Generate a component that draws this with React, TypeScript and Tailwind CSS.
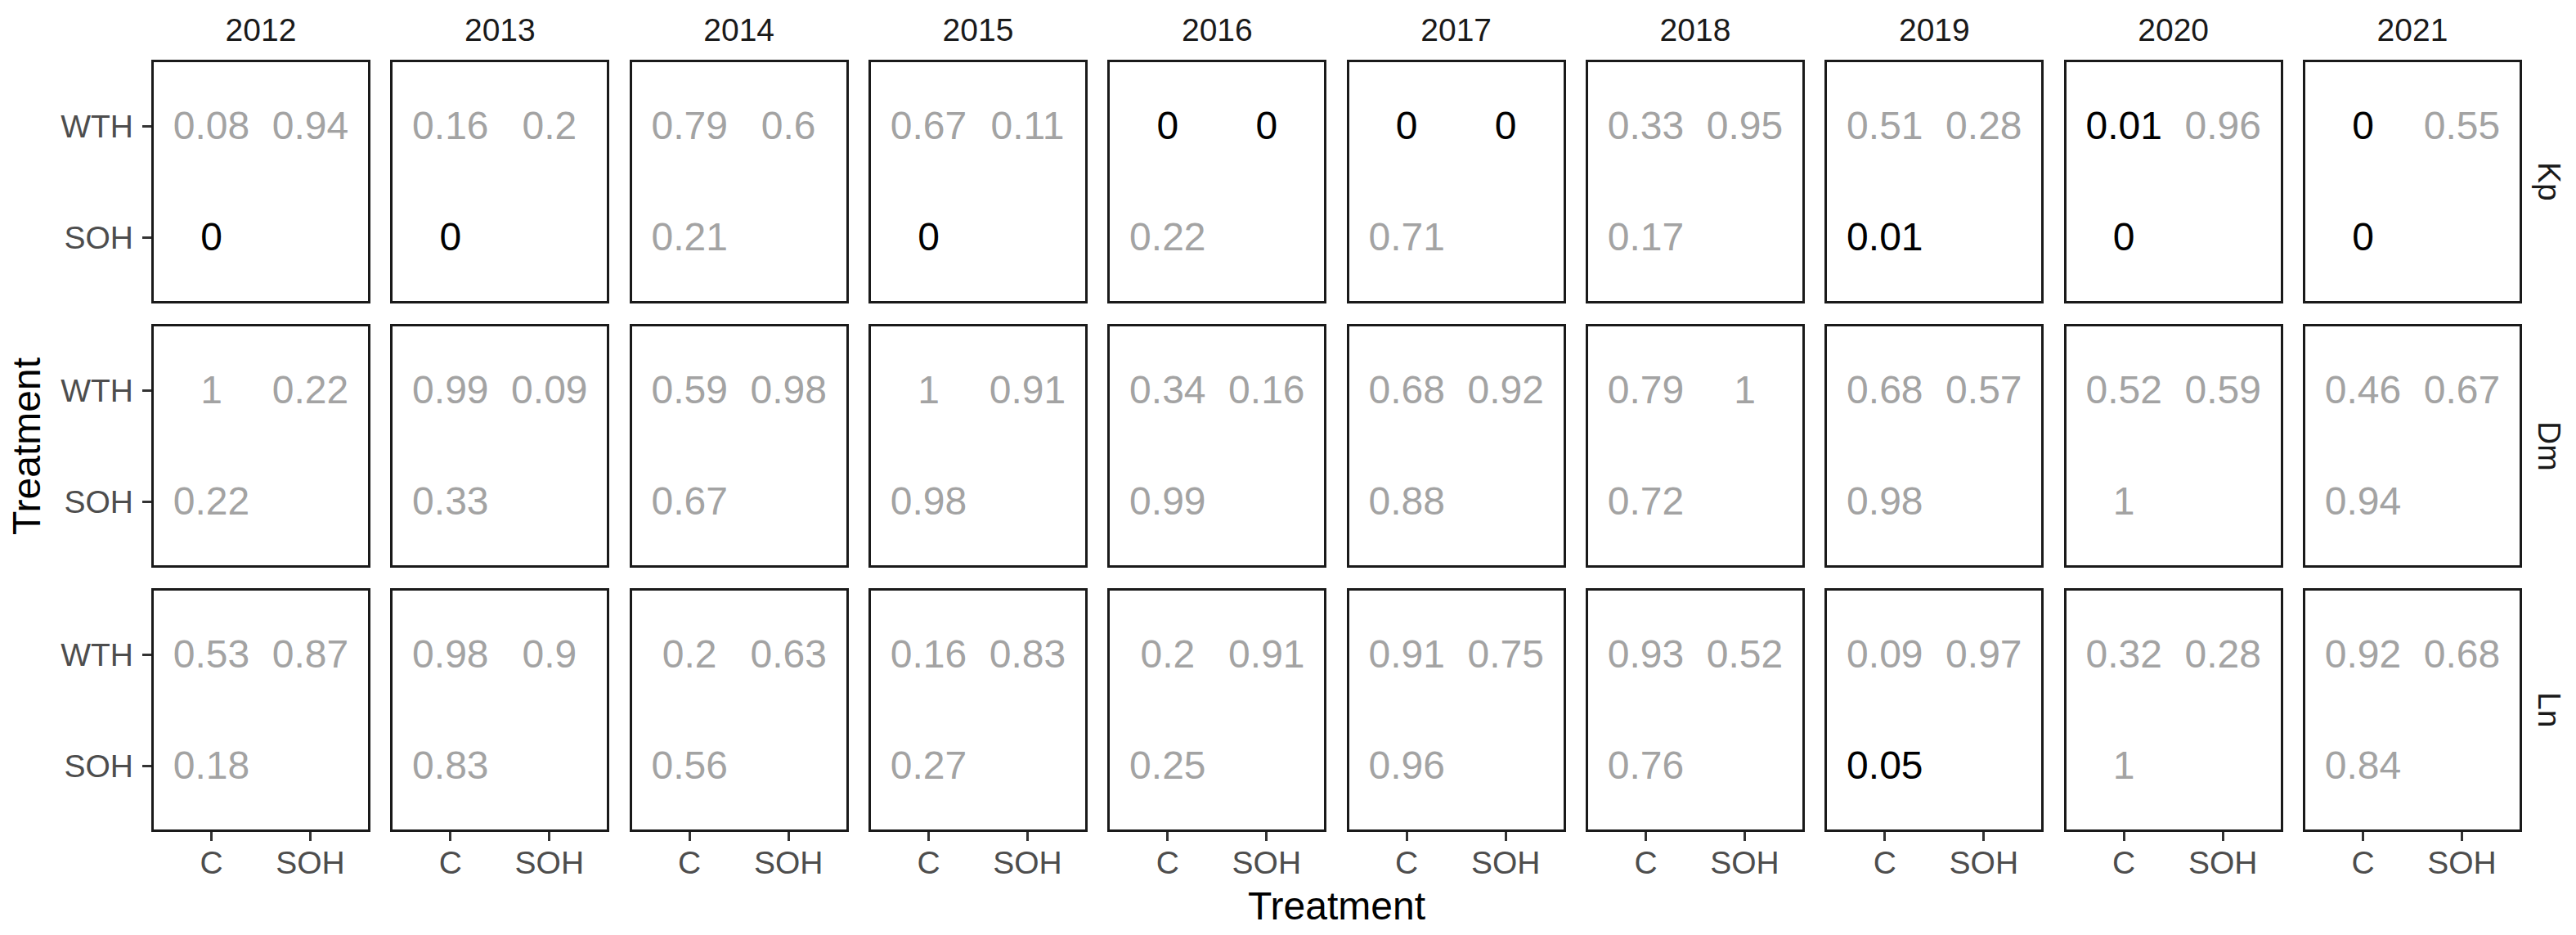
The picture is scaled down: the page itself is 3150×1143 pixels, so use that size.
import React from "react";

type Cell = [string, string, string];

const years = ["2012", "2013", "2014", "2015", "2016", "2017", "2018", "2019", "2020", "2021"];
const rows: { name: string; cells: Cell[] }[] = [
  {
    name: "Kp",
    cells: [
      ["0.08", "0.94", "0"],
      ["0.16", "0.2", "0"],
      ["0.79", "0.6", "0.21"],
      ["0.67", "0.11", "0"],
      ["0", "0", "0.22"],
      ["0", "0", "0.71"],
      ["0.33", "0.95", "0.17"],
      ["0.51", "0.28", "0.01"],
      ["0.01", "0.96", "0"],
      ["0", "0.55", "0"],
    ],
  },
  {
    name: "Dm",
    cells: [
      ["1", "0.22", "0.22"],
      ["0.99", "0.09", "0.33"],
      ["0.59", "0.98", "0.67"],
      ["1", "0.91", "0.98"],
      ["0.34", "0.16", "0.99"],
      ["0.68", "0.92", "0.88"],
      ["0.79", "1", "0.72"],
      ["0.68", "0.57", "0.98"],
      ["0.52", "0.59", "1"],
      ["0.46", "0.67", "0.94"],
    ],
  },
  {
    name: "Ln",
    cells: [
      ["0.53", "0.87", "0.18"],
      ["0.98", "0.9", "0.83"],
      ["0.2", "0.63", "0.56"],
      ["0.16", "0.83", "0.27"],
      ["0.2", "0.91", "0.25"],
      ["0.91", "0.75", "0.96"],
      ["0.93", "0.52", "0.76"],
      ["0.09", "0.97", "0.05"],
      ["0.32", "0.28", "1"],
      ["0.92", "0.68", "0.84"],
    ],
  },
];

function Val({ v }: { v: string }) {
  const sig = parseFloat(v) <= 0.05;
  return (
    <div className="flex items-center justify-center">
      <span className={sig ? "text-[48px] leading-none text-black" : "text-[48px] leading-none text-[#a3a3a3]"}>{v}</span>
    </div>
  );
}

function Panel({ c }: { c: Cell }) {
  return (
    <div className="border-[3px] border-[#1a1a1a] bg-white p-[10px] grid grid-cols-2 grid-rows-2">
      <Val v={c[0]} />
      <Val v={c[1]} />
      <Val v={c[2]} />
      <div />
    </div>
  );
}

function YLabel({ t }: { t: string }) {
  return (
    <div className="flex items-center justify-end">
      <span className="text-[39px] leading-none text-[#4d4d4d]">{t}</span>
      <div className="ml-[11px] w-[11px] h-[3px] bg-[#333333]" />
    </div>
  );
}

function XLabel({ t }: { t: string }) {
  return (
    <div className="flex flex-col items-center">
      <div className="w-[3px] h-[11px] bg-[#333333]" />
      <span className="mt-[7px] text-[39px] leading-none text-[#4d4d4d]">{t}</span>
    </div>
  );
}

export default function App() {
  return (
    <div
      className="w-[3150px] h-[1143px] bg-white grid grid-cols-[66px_119px_2899px_66px] grid-rows-[73px_944px_67px_59px]"
      style={{ fontFamily: '"Liberation Sans", Arial, sans-serif' }}
    >
      {/* row 1: top strips */}
      <div />
      <div />
      <div className="grid grid-cols-10 gap-x-[24.33px]">
        {years.map((y) => (
          <div key={y} className="flex items-center justify-center">
            <span className="text-[39px] leading-none text-[#1a1a1a]">{y}</span>
          </div>
        ))}
      </div>
      <div />

      {/* row 2: y title, y axis, panels, right strips */}
      <div className="flex items-center justify-center">
        <span className="text-[48px] leading-none text-black [writing-mode:vertical-rl] rotate-180">Treatment</span>
      </div>
      <div className="grid grid-rows-3 gap-y-[25px]">
        {rows.map((r) => (
          <div key={r.name} className="py-[13px] grid grid-rows-2">
            <YLabel t="WTH" />
            <YLabel t="SOH" />
          </div>
        ))}
      </div>
      <div className="grid grid-cols-10 grid-rows-3 gap-x-[24.33px] gap-y-[25px]">
        {rows.map((r) => r.cells.map((c, i) => <Panel key={r.name + i} c={c} />))}
      </div>
      <div className="grid grid-rows-3 gap-y-[25px]">
        {rows.map((r) => (
          <div key={r.name} className="flex items-center justify-center">
            <span className="text-[39px] leading-none text-[#1a1a1a] [writing-mode:vertical-rl]">{r.name}</span>
          </div>
        ))}
      </div>

      {/* row 3: x axis */}
      <div />
      <div />
      <div className="grid grid-cols-10 gap-x-[24.33px]">
        {years.map((y) => (
          <div key={y} className="px-[13px] grid grid-cols-2 items-start">
            <XLabel t="C" />
            <XLabel t="SOH" />
          </div>
        ))}
      </div>
      <div />

      {/* row 4: x title */}
      <div />
      <div />
      <div className="flex justify-center items-start">
        <span className="text-[48px] leading-none text-black">Treatment</span>
      </div>
      <div />
    </div>
  );
}
